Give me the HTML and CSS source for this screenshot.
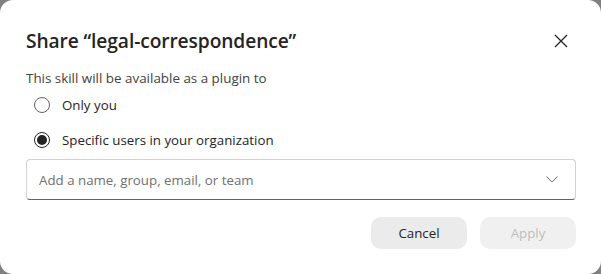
FILE: index.html
```html
<!DOCTYPE html>
<html>
<head>
<meta charset="utf-8">
<link rel="stylesheet" href="styles.css">
</head>
<body>
<div class="dialog">
  <div class="header">
    <h1 class="title">Share “legal-correspondence”</h1>
    <button class="close" aria-label="Close">
      <svg width="14" height="14" viewBox="0 0 14 14"><path d="M1 1 L13 13 M13 1 L1 13" stroke="#242424" stroke-width="1.3" fill="none"/></svg>
    </button>
  </div>
  <p class="desc">This skill will be available as a plugin to</p>
  <div class="options">
    <label class="option"><span class="radio"></span><span>Only you</span></label>
    <label class="option"><span class="radio checked"></span><span>Specific users in your organization</span></label>
  </div>
  <div class="combo">
    <span class="placeholder">Add a name, group, email, or team</span>
    <svg class="chev" width="12" height="7" viewBox="0 0 12 7"><path d="M0.5 0.5 L6 6 L11.5 0.5" stroke="#707070" stroke-width="1" fill="none"/></svg>
  </div>
  <div class="actions">
    <button class="btn">Cancel</button>
    <button class="btn disabled">Apply</button>
  </div>
</div>
</body>
</html>
```
FILE: styles.css
```css
html, body { margin: 0; padding: 0; }
body {
  background: #808080;
  width: 601px;
  height: 274px;
  overflow: hidden;
  font-family: "Open Sans", "Noto Sans", sans-serif;
  color: #242424;
}
.dialog {
  box-sizing: border-box;
  width: 601px;
  height: 274px;
  background: #fff;
  border-radius: 13px;
  padding: 0 25px 0 26px;
  display: flex;
  flex-direction: column;
}
.header {
  display: flex;
  align-items: center;
  justify-content: space-between;
  height: 28px;
  margin-top: 27px;
}
.title {
  margin: 0;
  font-size: 19.2px;
  font-weight: 600;
  letter-spacing: -0.1px;
  line-height: 28px;
}
.close {
  border: 0;
  background: none;
  padding: 0;
  width: 24px;
  height: 24px;
  display: flex;
  align-items: center;
  justify-content: center;
  margin-right: 3px;
}
.desc {
  margin: 14px 0 0;
  font-size: 13.4px;
  line-height: 18px;
  color: #424242;
}
.options {
  display: flex;
  flex-direction: column;
  gap: 15px;
  margin-top: 8px;
  padding-left: 8px;
}
.option {
  display: flex;
  align-items: center;
  gap: 12px;
  height: 20px;
  font-size: 13.3px;
  color: #242424;
}
.radio {
  box-sizing: border-box;
  width: 16px;
  height: 16px;
  border: 1px solid #616161;
  border-radius: 50%;
  position: relative;
}
.radio.checked { border-color: #242424; }
.radio.checked::after {
  content: "";
  position: absolute;
  left: 2px; top: 2px;
  width: 10px; height: 10px;
  border-radius: 50%;
  background: #242424;
}
.combo {
  box-sizing: border-box;
  margin-top: 9px;
  height: 41px;
  border: 1px solid #d1d1d1;
  border-bottom-color: #616161;
  border-radius: 4px;
  display: flex;
  align-items: center;
  justify-content: space-between;
  padding: 0 17px 0 12px;
}
.placeholder {
  font-size: 13.3px;
  color: #707070;
}
.actions {
  display: flex;
  justify-content: flex-end;
  gap: 13px;
  margin-top: 17px;
}
.btn {
  width: 96px;
  height: 32px;
  border: 0;
  border-radius: 10px;
  background: #ebebeb;
  font-family: inherit;
  font-size: 13.3px;
  color: #242424;
  padding: 0;
}
.btn.disabled { color: #bdbdbd; background: #f0f0f0; }
```
